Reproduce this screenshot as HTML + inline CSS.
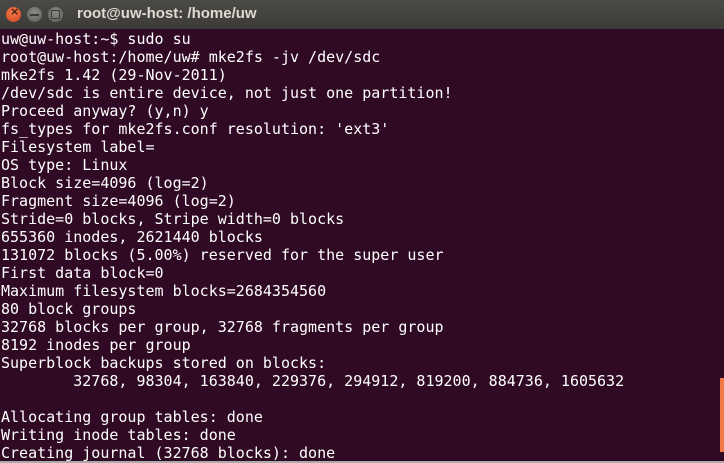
<!DOCTYPE html>
<html><head><style>
html,body{margin:0;padding:0;width:724px;height:463px;overflow:hidden;background:#300a24;}
#t{position:absolute;left:0;top:0;width:724px;height:29px;background:linear-gradient(#4b4a46,#3c3b37);}
#t .ttl{position:absolute;left:77px;top:5px;font:bold 15px "Liberation Sans",sans-serif;color:#dfdbd2;}
.b{position:absolute;top:7px;width:15px;height:15px;border-radius:50%;}
#term{position:absolute;left:1px;top:30px;margin:0;font:15px/18px "DejaVu Sans Mono",monospace;color:#fff;white-space:pre;}
#sb{position:absolute;left:720px;top:378px;width:4px;height:74px;background:#f07746;}
#bot{position:absolute;left:0;top:461px;width:724px;height:2px;background:#aaa;}
</style></head><body>
<div id="t">
<div class="b" style="left:6px;background:radial-gradient(circle at 50% 35%,#f47a4e,#d3471f);"></div>
<div class="b" style="left:27px;background:radial-gradient(circle at 50% 35%,#8a8984,#5d5c58);"></div>
<div class="b" style="left:48px;background:radial-gradient(circle at 50% 35%,#8a8984,#5d5c58);"></div>
<span style="position:absolute;left:10px;top:5px;font:bold 11px 'DejaVu Sans',sans-serif;color:#3c1a10">×</span>
<span style="position:absolute;left:30px;top:14px;width:9px;height:2px;background:#3c3b37"></span>
<span style="position:absolute;left:51px;top:10px;width:7px;height:7px;border:1px solid #3c3b37"></span>
<div class="ttl">root@uw-host: /home/uw</div>
</div>
<pre id="term">uw@uw-host:~$ sudo su
root@uw-host:/home/uw# mke2fs -jv /dev/sdc
mke2fs 1.42 (29-Nov-2011)
/dev/sdc is entire device, not just one partition!
Proceed anyway? (y,n) y
fs_types for mke2fs.conf resolution: 'ext3'
Filesystem label=
OS type: Linux
Block size=4096 (log=2)
Fragment size=4096 (log=2)
Stride=0 blocks, Stripe width=0 blocks
655360 inodes, 2621440 blocks
131072 blocks (5.00%) reserved for the super user
First data block=0
Maximum filesystem blocks=2684354560
80 block groups
32768 blocks per group, 32768 fragments per group
8192 inodes per group
Superblock backups stored on blocks:
        32768, 98304, 163840, 229376, 294912, 819200, 884736, 1605632

Allocating group tables: done
Writing inode tables: done
Creating journal (32768 blocks): done</pre>
<div id="sb"></div>
<div id="bot"></div>
</body></html>
